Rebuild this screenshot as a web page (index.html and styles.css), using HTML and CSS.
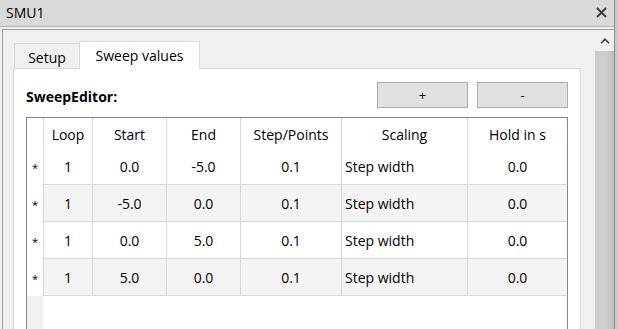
FILE: index.html
```html
<!DOCTYPE html>
<html lang="en">
<head>
  <meta charset="UTF-8" />
  <title>SMU1</title>
  <link rel="stylesheet" href="styles.css">
</head>
<body>
  <div class="app">
    <div class="titlebar">
      <span class="title">SMU1</span>
      <svg class="close" width="11" height="11" viewBox="0 0 11 11">
        <path d="M1 1 L10 10 M10 1 L1 10" stroke="#3a3a3a" stroke-width="1.8" fill="none" />
      </svg>
    </div>

    <div class="frame">
      <div class="content">
        <div class="tabs">
          <div class="tab">Setup</div>
          <div class="tab active">Sweep values</div>
        </div>

        <div class="panel">
          <div class="toolbar">
            <span class="editor-label">SweepEditor:</span>
            <div class="buttons">
              <button type="button">+</button>
              <button type="button">-</button>
            </div>
          </div>

          <div class="grid-box">
            <div class="grid">
              <div class="cell corner"></div>
              <div class="cell head">Loop</div>
              <div class="cell head">Start</div>
              <div class="cell head">End</div>
              <div class="cell head">Step/Points</div>
              <div class="cell head">Scaling</div>
              <div class="cell head last">Hold in s</div>

              <div class="cell rowhead">*</div>
              <div class="cell">1</div>
              <div class="cell">0.0</div>
              <div class="cell">-5.0</div>
              <div class="cell">0.1</div>
              <div class="cell left">Step width</div>
              <div class="cell last">0.0</div>

              <div class="cell rowhead">*</div>
              <div class="cell alt">1</div>
              <div class="cell alt">-5.0</div>
              <div class="cell alt">0.0</div>
              <div class="cell alt">0.1</div>
              <div class="cell alt left">Step width</div>
              <div class="cell alt last">0.0</div>

              <div class="cell rowhead">*</div>
              <div class="cell">1</div>
              <div class="cell">0.0</div>
              <div class="cell">5.0</div>
              <div class="cell">0.1</div>
              <div class="cell left">Step width</div>
              <div class="cell last">0.0</div>

              <div class="cell rowhead">*</div>
              <div class="cell alt">1</div>
              <div class="cell alt">5.0</div>
              <div class="cell alt">0.0</div>
              <div class="cell alt">0.1</div>
              <div class="cell alt left">Step width</div>
              <div class="cell alt last">0.0</div>
            </div>
          </div>
        </div>
      </div>

      <div class="scrollbar">
        <div class="scroll-up">
          <svg width="10" height="6" viewBox="0 0 10 6">
            <path d="M1 5.2 L5 1.2 L9 5.2" stroke="#404040" stroke-width="1.6" fill="none" />
          </svg>
        </div>
        <div class="thumb"></div>
      </div>
    </div>
  </div>
</body>
</html>
```

FILE: styles.css
```css
* {
  box-sizing: border-box;
}
body {
  margin: 0;
  width: 618px;
  height: 329px;
  overflow: hidden;
  background: #c9c9c9;
  font-family: 'Open Sans', 'Noto Sans', sans-serif;
  font-size: 14px;
  color: #000;
}
.app {
  width: 615px;
  height: 329px;
  display: flex;
  flex-direction: column;
  background: #f0f0f0;
  border-right: 1px solid #8a8a8a;
}
.titlebar {
  height: 27px;
  flex-shrink: 0;
  display: flex;
  align-items: center;
  justify-content: space-between;
  padding: 0 7px 1px 6px;
  background: #d9d9d9;
  border-bottom: 1px solid #b4b4b4;
}
.title {
  font-size: 14px;
  line-height: 1;
}
.close {
  display: block;
}
.frame {
  flex: 1;
  min-height: 0;
  display: flex;
  margin: 2px 0 0 2px;
  border-top: 1px solid #a0a0a0;
  border-left: 1px solid #a0a0a0;
}
.content {
  flex: 1;
  display: flex;
  flex-direction: column;
  padding: 11px 14px 0 10px;
}
.tabs {
  display: flex;
  align-items: flex-end;
  padding-left: 1px;
  height: 27px;
  flex-shrink: 0;
}
.tab {
  width: 66px;
  height: 25px;
  display: flex;
  align-items: center;
  justify-content: center;
  padding-top: 2px;
  background: #f0f0f0;
  border: 1px solid #d9d9d9;
  border-bottom: none;
}
.tab.active {
  width: 121px;
  height: 28px;
  margin: 0 0 -1px -1px;
  padding-top: 0;
  padding-bottom: 1px;
  background: #fff;
  position: relative;
}
.panel {
  flex: 1;
  min-height: 0;
  overflow: hidden;
  background: #fff;
  border: 1px solid #d9d9d9;
  border-bottom: none;
  padding: 13px 12px 0 12px;
}
.toolbar {
  display: flex;
  align-items: center;
  justify-content: space-between;
}
.editor-label {
  font-weight: 700;
  font-size: 14px;
  padding-top: 3px;
}
.buttons {
  display: flex;
  gap: 9px;
}
button {
  width: 91px;
  height: 26px;
  background: #e1e1e1;
  border: 1px solid #adadad;
  font-family: inherit;
  font-size: 13px;
  color: #000;
  padding: 0;
}
.grid-box {
  margin-top: 9px;
  height: 240px;
  border: 1px solid #828790;
  background: linear-gradient(to right, #f0f0f0 16px, #fff 16px);
}
.grid {
  display: grid;
  grid-template-columns: 17px 49px 74px 74px 101px 126px 99px;
}
.cell {
  height: 37px;
  display: flex;
  align-items: center;
  justify-content: center;
  background: #fff;
  border-right: 1px solid #d9d9d9;
  border-bottom: 1px solid #d9d9d9;
}
.cell.alt {
  background: #f4f4f4;
}
.cell.left {
  justify-content: flex-start;
  padding-left: 3px;
}
.cell.last {
  border-right: none;
}
.corner,
.head {
  height: 30px;
  border-bottom: none;
  padding-top: 2px;
}
.rowhead {
  border-bottom: none;
  font-size: 11px;
  padding-top: 2px;
}
.scrollbar {
  width: 19px;
  display: flex;
  flex-direction: column;
}
.scroll-up {
  height: 21px;
  display: flex;
  align-items: center;
  justify-content: center;
  background: #f0f0f0;
}
.scroll-up svg {
  display: block;
}
.thumb {
  flex: 1;
  background: linear-gradient(to right, #cdcdcd 60%, #bdbdbd);
}
```
